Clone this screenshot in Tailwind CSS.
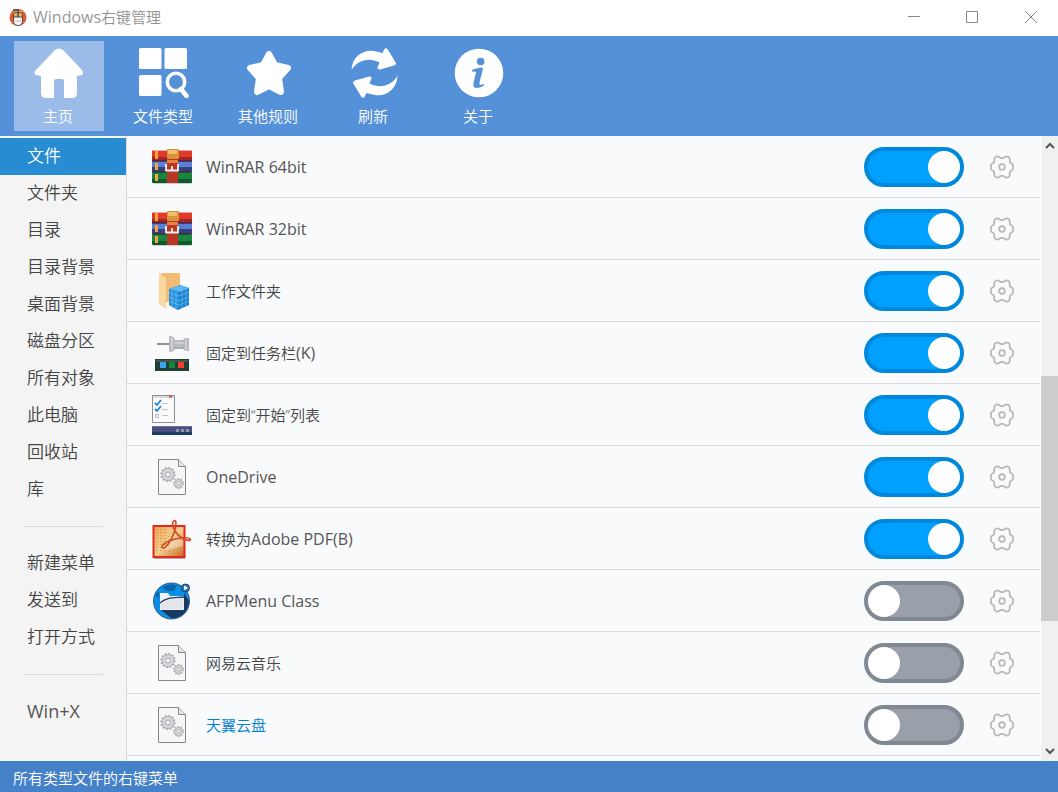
<!DOCTYPE html>
<html lang="zh-CN">
<head>
<meta charset="utf-8">
<title>Windows右键管理</title>
<script src="https://cdn.jsdelivr.net/npm/@tailwindcss/browser@4"></script>
</head>
<body class="flex h-screen flex-col overflow-hidden bg-white font-['Open_Sans','Noto_Sans_CJK_SC',sans-serif] text-[15px] font-[350] text-[#444]">

<svg class="absolute size-0" aria-hidden="true">
  <symbol id="rar" viewBox="0 0 40 40">
    <rect x="1" y="34" width="39" height="3" rx="1" fill="#c9ccd0"/>
    <rect y="3" width="40" height="12" rx="1" fill="#a32626"/><rect y="4" width="40" height="6" fill="#e03b28"/><rect y="3" width="40" height="1" fill="#eba5a5"/>
    <rect y="14" width="40" height="11" rx="1" fill="#35407f"/><rect y="15" width="40" height="5" fill="#5b7fd6"/>
    <rect y="25" width="40" height="11" rx="1" fill="#0d5a2a"/><rect y="26" width="40" height="6" fill="#1c8440"/>
    <path d="M0 13.500h40M0 24.500h40" stroke="#5d2030" stroke-width=".8"/>
    <path d="M3 4h3v8H3zM3 16h3v7H3zM3 27h3v7H3z" fill="#f0a640"/>
    <rect x="15" y="2" width="12" height="10" rx="1" fill="#d9913a"/><rect x="16" y="3" width="9" height="4" fill="#f2bf68"/>
    <rect x="15" y="12" width="11" height="24" fill="#b93524"/><path d="M15 13h11v3H15z" fill="#e8853c"/>
    <path d="M14 17v6.500h12V17M20 19v4" fill="none" stroke="#f2f2f2" stroke-width="1.800"/>
  </symbol>
  <symbol id="folder" viewBox="0 0 40 40">
    <path d="M9 2h19v20L14 36z" fill="#f2bb75"/><path d="M7 2l7 5v31l-7-5z" fill="#f9d89f"/><path d="M14 31h5v5l-5 2z" fill="#fff4df"/>
    <path d="M17 18l11-4 9 3v17l-11 5-9-5z" fill="#1a80cd"/>
    <path d="M17 18l11-4 9 3-9 4z" fill="#5cb7ee"/><path d="M17 18l10 3v18l-10-5z" fill="#2492dc"/>
    <path d="M17 22l10 3 10-4M17 26l10 4 10-4M17 30l10 4 10-4M20 19v16M24 20v17M30 20v17M34 18v17" fill="none" stroke="#79c6f3" stroke-width=".6"/>
  </symbol>
  <symbol id="pin" viewBox="0 0 40 40">
    <path d="M5 11h13" stroke="#77777b" stroke-width="1.600"/><path d="M17 3c4 0 5 1 6 4h8c1-2 3-2 6-2v13c-3 0-5 0-6-2h-8c-1 2-2 3-6 3z" fill="#b9babf"/>
    <path d="M20 5v12M23 10h9M34 7v10" stroke="#cfcfd4" stroke-width="2"/><path d="M22 15h10" stroke="#9c9da2"/>
    <path d="M3 26h34v12H3z" fill="#223e31"/><path d="M4 27h32v2H4z" fill="#40554b"/>
    <path d="M8 29h6v6H8z" fill="#3ea2ec"/><path d="M17 29h6v6h-6z" fill="#17853b"/><path d="M26 29h6v6h-6z" fill="#f23d2c"/>
  </symbol>
  <symbol id="list" viewBox="0 0 40 40">
    <path d="M.5.5h22v27H.5z" fill="#fbfbfb" stroke="#8d8f93"/><path d="M1 2h21" stroke="#b8babd"/><path d="M17 1.500h3" stroke="#d04a3a" stroke-width="2"/>
    <path d="M3 8l2 2 4-5M3 14l2 2 4-5" fill="none" stroke="#1f83d5" stroke-width="1.800"/><path d="M3.500 19.500h3v3h-3z" fill="none" stroke="#b4b4b4"/>
    <path d="M10 8.500h6M10 14.500h6M10 20.500h6" stroke="#c4c4c4"/>
    <path d="M0 31h40v9H0z" fill="#1f3f63"/><path d="M0 31h40v6H0z" fill="#4a4f80"/><path d="M0 31.500h40" stroke="#6c7199"/>
    <path d="M24 34h3v3h-3zM29 34h3v3h-3zM34 34h3v3h-3z" fill="#9296a8"/>
  </symbol>
  <symbol id="doc" viewBox="0 0 40 40">
    <path d="M6.500 2.500h20l7 7v28h-27z" fill="#f7f7f7" stroke="#84878c"/><path d="M26.500 2.500v7h7" fill="#e4e5e7" stroke="#84878c"/>
    <circle cx="16" cy="17.500" r="6.800" fill="none" stroke="#9fa3a9" stroke-width="1.600" stroke-dasharray="1.900 1.660"/>
    <circle cx="16" cy="17.500" r="4.500" fill="none" stroke="#d6d8db" stroke-width="4"/><circle cx="16" cy="17.500" r="2.500" fill="#f7f7f7" stroke="#9fa3a9"/>
    <circle cx="16" cy="17.500" r="6" fill="none" stroke="#9fa3a9" stroke-width=".8"/>
    <circle cx="26.500" cy="26.500" r="4.700" fill="none" stroke="#9fa3a9" stroke-width="1.400" stroke-dasharray="1.500 1.450"/>
    <circle cx="26.500" cy="26.500" r="3" fill="none" stroke="#d6d8db" stroke-width="2.500"/><circle cx="26.500" cy="26.500" r="1.600" fill="#f7f7f7" stroke="#9fa3a9" stroke-width=".8"/>
    <circle cx="26.500" cy="26.500" r="4" fill="none" stroke="#9fa3a9" stroke-width=".7"/>
  </symbol>
  <linearGradient id="amber" x2="1" y2="1"><stop stop-color="#eda552"/><stop offset=".5" stop-color="#f3cf90"/><stop offset="1" stop-color="#c46a22"/></linearGradient>
  <symbol id="pdf" viewBox="0 0 40 40">
    <path d="M2 39.500h31" stroke="#aaa"/><path d="M1.500 7h31v31h-31z" fill="url(#amber)" stroke="#e8271f" stroke-width="2"/>
    <path d="M5 10v24M9 10v24M13 10v24M17 17v17" stroke="#c77a2b" stroke-width="1" stroke-dasharray="1 2"/>
    <path d="M12 32l10-12 9 2v5z" fill="#fff" opacity=".35"/>
    <path d="M22 2c3-3 2 7 0 12-3 8-8 15-11 15-3-1 1-6 9-8 6-2 14-4 18-1 2 3-5 1-8-1-5-3-8-8-9-12-1-3 0-5 1-5z" fill="none" stroke="#d14a27" stroke-width="1.600"/>
  </symbol>
  <symbol id="afp" viewBox="0 0 40 40">
    <circle cx="19.500" cy="20" r="18" fill="#0b8fe5" stroke="#315a86"/><path d="M10 7c4-4 10-4 15-3l-3 6h-6zM3 14l4-4v8z" fill="#0a62ac"/><path d="M32 12l5 8c0 10-8 18-18 17L9 29h23z" fill="#173a5e"/>
    <path d="M8 12h8l2 3h14v14H8z" fill="#f0f1f4"/><path d="M8 22c6-6 15-5 24-6" fill="none" stroke="#1c3c63" stroke-width="1.300"/><path d="M9 23c7-5 14-5 22-6v11H9z" fill="#e2e5ea"/>
    <circle cx="33.500" cy="7" r="4" fill="#2f7cbb" stroke="#243a5c"/><path d="M32 4.500l4 2.500-4 2z" fill="#fff"/>
  </symbol>
  <symbol id="gear" viewBox="0 0 24 24">
    <path d="M6.500 1.600Q8 .9 9 2q3 2.200 6 0 1-1.100 2.500-.4L19 2.500q1 .7.700 2-.4 3.500 2.300 4.200 1 .3 1 1.300v4q0 1-1 1.300-2.700.7-2.300 4.200.3 1.300-.7 2l-1.500.9Q16 23.100 15 22q-3-2.200-6 0-1 1.100-2.500.4L5 21.500q-1-.7-.7-2Q4.700 16 2 15.300 1 15 1 14v-4q0-1 1-1.300 2.700-.7 2.300-4.200-.3-1.300.7-2z" fill="none" stroke="#b7b7b7" stroke-width="1.700" stroke-linejoin="round"/>
    <circle cx="12" cy="12" r="2.800" fill="none" stroke="#b7b7b7" stroke-width="1.700"/>
  </symbol>
</svg>

<header class="flex h-9 shrink-0 items-center pb-0.5 pl-[9px] text-[#929292]">
  <svg class="size-[18px]" viewBox="0 0 18 18"><circle cx="9" cy="9.500" r="8.500" fill="#e9592f"/><path d="M4 5l2-2h7v6H4z" fill="#f2b457"/><rect x="4.500" y="4.500" width="9" height="13" rx="4" fill="#f5f5f5" stroke="#444b55"/><path d="M4.500 9V6q1-2 3-1.500h3q3 0 3 2V9z" fill="#eeb04f" stroke="#444b55"/><path d="M9 4V2H4M9 5v4" fill="none" stroke="#444b55" stroke-width="1.500"/><path d="M6 13h6" stroke="#bbb"/></svg>
  <h1 class="ml-1.5 flex-1 font-[350]"><span class="text-base font-normal text-[#999]">Windows</span>右键管理</h1>
  <button aria-label="最小化" class="grid h-[34px] w-[58px] place-items-center"><svg class="size-3" viewBox="0 0 12 12"><path d="M0 5.500h12" stroke="#888"/></svg></button>
  <button aria-label="最大化" class="grid h-[34px] w-[58px] place-items-center"><svg class="size-3" viewBox="0 0 12 12"><path d="M.5.5h11v11H.5z" fill="none" stroke="#888"/></svg></button>
  <button aria-label="关闭" class="grid h-[34px] w-[57px] place-items-center pl-[3px]"><svg class="size-3" viewBox="0 0 12 12"><path d="M0 0l12 12M12 0L0 12" stroke="#888"/></svg></button>
</header>

<nav class="flex h-[100px] shrink-0 items-center gap-[15px] bg-[#5591d8] px-3.5 text-white">
  <button class="flex h-[90px] w-[90px] flex-col items-center gap-2 bg-[#9bbce9] pt-[7px] leading-5">
    <svg class="size-[50px]" viewBox="0 0 50 50" fill="#fff"><path d="M21 2q4-3 8 0l19 20q2 3 0 5l-5 1v17q0 5-5 5h-7q-1 0-1-1V33q0-2-2-2h-6q-2 0-2 2v16q0 1-1 1h-7q-5 0-5-5V28l-5-1q-3-2 0-5z"/></svg>
    <span class="pr-0.5">主页</span>
  </button>
  <button class="flex h-[90px] w-[90px] flex-col items-center gap-2 pt-[7px] leading-5">
    <svg class="size-[50px]" viewBox="0 0 50 50" fill="#fff"><rect width="22.500" height="21" rx="1.500"/><rect x="25.500" width="22.500" height="21" rx="1.500"/><rect y="27" width="22.500" height="21" rx="1.500"/><circle cx="37" cy="34" r="8.700" fill="none" stroke="#fff" stroke-width="3.500"/><path d="M42 41l5.500 7" stroke="#fff" stroke-width="4.500" stroke-linecap="round"/></svg>
    <span class="pr-0.5">文件类型</span>
  </button>
  <button class="flex h-[90px] w-[90px] flex-col items-center gap-2 pt-[7px] leading-5">
    <svg class="size-[50px]" viewBox="0 0 50 50" fill="#fff"><path d="M25 6l6 11 13 3-9 10 2 14-12-6-12 6 2-14-9-10 13-3z" stroke="#fff" stroke-width="6" stroke-linejoin="round"/></svg>
    <span class="pr-0.5">其他规则</span>
  </button>
  <button class="flex h-[90px] w-[90px] flex-col items-center gap-2 pt-[7px] leading-5">
    <svg class="size-[50px]" viewBox="0 0 50 50" fill="#fff"><g id="sync"><path d="M2.500 22C3 9 14 1 25 3q5 1 8.500 2l2-4q1-1.500 3 0l8.500 14q0 2-2 2.500l-14 4q-3 0-2.500-2l2-5C20 9 9 12 2.500 22z"/></g><use href="#sync" transform="rotate(180 25.500 25)"/></svg>
    <span class="pr-0.5">刷新</span>
  </button>
  <button class="flex h-[90px] w-[90px] flex-col items-center gap-2 pt-[7px] leading-5">
    <svg class="size-[50px]" viewBox="0 0 50 50"><circle cx="25" cy="25" r="24.300" fill="#fff"/><g fill="#5591d8"><circle cx="26.700" cy="13.500" r="3.800"/><path d="M18 22q5-2.500 10-2.500l1 1-3.500 14q-.5 2 1 2.500l3.500-1v1.500q-4 2.500-8 2.500-3.500-.5-2.500-5l2.500-10.500q0-1.500-4-1z"/></g></svg>
    <span class="pr-0.5">关于</span>
  </button>
</nav>

<main class="flex min-h-0 flex-1">
  <aside class="flex w-[127px] shrink-0 flex-col border-r border-[#d9d9d9] bg-[#f4f4f4] pt-0.5 text-[17px] leading-[35px]">
    <a href="#" class="bg-[#288cd3] pb-0.5 pl-[27px] text-white">文件</a>
    <a href="#" class="pb-0.5 pl-[27px]">文件夹</a>
    <a href="#" class="pb-0.5 pl-[27px]">目录</a>
    <a href="#" class="pb-0.5 pl-[27px]">目录背景</a>
    <a href="#" class="pb-0.5 pl-[27px]">桌面背景</a>
    <a href="#" class="pb-0.5 pl-[27px]">磁盘分区</a>
    <a href="#" class="pb-0.5 pl-[27px]">所有对象</a>
    <a href="#" class="pb-0.5 pl-[27px]">此电脑</a>
    <a href="#" class="pb-0.5 pl-[27px]">回收站</a>
    <a href="#" class="pb-0.5 pl-[27px]">库</a>
    <hr class="my-[18px] ml-6 mr-[23px] border-[#d9d9d9]">
    <a href="#" class="pb-0.5 pl-[27px]">新建菜单</a>
    <a href="#" class="pb-0.5 pl-[27px]">发送到</a>
    <a href="#" class="pb-0.5 pl-[27px]">打开方式</a>
    <hr class="my-[18px] ml-6 mr-[23px] border-[#d9d9d9]">
    <a href="#" class="pl-[27px] text-lg/[37px] font-normal text-[#555]">Win+X</a>
  </aside>

  <ul id="items" class="min-w-0 flex-1 overflow-hidden bg-[#f9fafc]"></ul>

  <div class="flex w-[18px] shrink-0 flex-col border-l border-white bg-[#f0f0f0]">
    <button aria-label="向上滚动" class="grid h-5 place-items-center"><svg class="h-2 w-2.5" viewBox="0 0 10 8"><path d="M1 6l4-4 4 4" fill="none" stroke="#555" stroke-width="2"/></svg></button>
    <div class="flex flex-1 flex-col">
      <div class="flex-[220]"></div>
      <div class="flex-[245] bg-[#cdcdcd]"></div>
      <div class="flex-[120]"></div>
    </div>
    <button aria-label="向下滚动" class="grid h-5 place-items-center"><svg class="h-2 w-2.5" viewBox="0 0 10 8"><path d="M1 2l4 4 4-4" fill="none" stroke="#555" stroke-width="2"/></svg></button>
  </div>
</main>

<footer class="h-[31px] shrink-0 bg-[#4581c8] pl-[13px] leading-[34px] text-white">所有类型文件的右键菜单</footer>

<script>
  // Each entry: icon, Chinese part of the name, Latin part, enabled, colour
  const items = [
    ['rar', '', 'WinRAR 64bit', true],
    ['rar', '', 'WinRAR 32bit', true],
    ['folder', '工作文件夹', '', true],
    ['pin', '固定到任务栏', '(K)', true],
    ['list', '固定到“开始”列表', '', true],
    ['doc', '', 'OneDrive', true],
    ['pdf', '转换为', 'Adobe PDF(B)', true],
    ['afp', '', 'AFPMenu Class', false],
    ['doc', '网易云音乐', '', false],
    ['doc', '天翼云盘', '', false, 'text-[#0080d4]'],
  ];
  document.getElementById('items').innerHTML = items.map(([icon, name, latin, on, color = ''], i) => `
    <li class="flex h-[62px] items-center border-b border-[#d9d9d9] pl-[25px] pr-[26px]">
      <svg class="size-10 shrink-0" aria-hidden="true"><use href="#${icon}"/></svg>
      <label for="item${i}" class="ml-3.5 flex-1 ${latin ? '' : 'pt-0.5'} ${color}">${name}${latin && `<span class="text-base/6 font-normal text-[#555]">${latin}</span>`}</label>
      <input id="item${i}" type="checkbox" ${on ? 'checked' : ''} class="flex h-10 w-[100px] appearance-none rounded-full border-4 border-[#808891] bg-[#99a0a9] before:size-8 before:rounded-full before:bg-white before:content-[''] checked:justify-end checked:border-[#0089dc] checked:bg-[#00a0ff]">
      <button aria-label="${name}${latin} 设置" class="ml-[26px]"><svg class="size-6"><use href="#gear"/></svg></button>
    </li>`).join('');
</script>
</body>
</html>
